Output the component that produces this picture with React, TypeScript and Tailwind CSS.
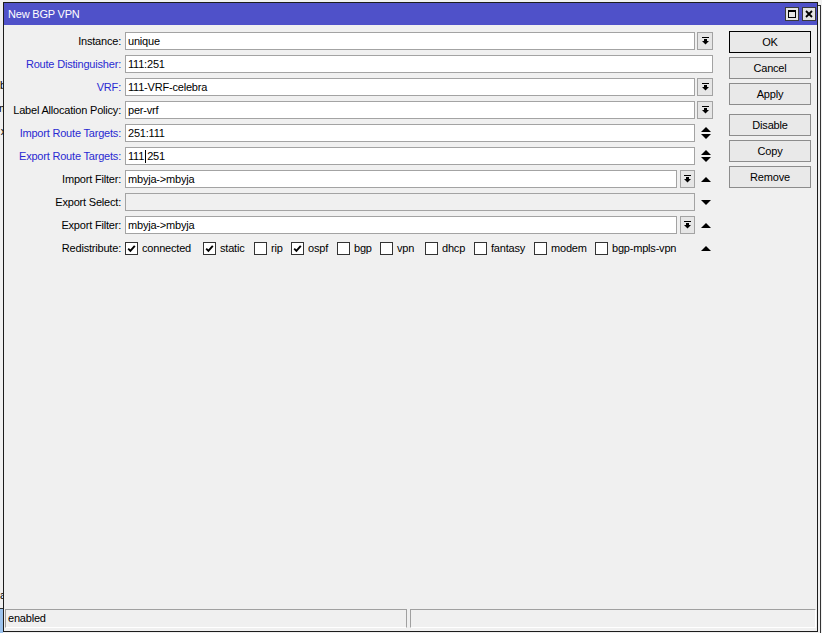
import React from "react";

const DropIcon = () => (
  <svg width="7" height="8" viewBox="0 0 7 8" className="block">
    <rect x="0" y="0" width="7" height="1" fill="#000" />
    <rect x="2" y="2" width="3" height="2" fill="#000" />
    <polygon points="0,4 7,4 3.5,7.5" fill="#000" />
  </svg>
);

const UpDown = () => (
  <svg width="10" height="12" viewBox="0 0 10 12" className="block">
    <polygon points="5,0 10,5 0,5" fill="#000" />
    <polygon points="0,7 10,7 5,12" fill="#000" />
  </svg>
);

const Up = () => (
  <svg width="10" height="5" viewBox="0 0 10 5" className="block">
    <polygon points="5,0 10,5 0,5" fill="#000" />
  </svg>
);

const Down = () => (
  <svg width="10" height="5" viewBox="0 0 10 5" className="block">
    <polygon points="0,0 10,0 5,5" fill="#000" />
  </svg>
);

const Label = ({ text, blue }: { text: string; blue?: boolean }) => (
  <div
    className={`w-[117px] shrink-0 text-right whitespace-nowrap ${
      blue ? "text-[#2a2ad2]" : "text-black"
    }`}
  >
    {text}
  </div>
);

const Input = ({
  children,
  className = "",
  disabled,
}: {
  children?: React.ReactNode;
  className?: string;
  disabled?: boolean;
}) => (
  <div
    className={`h-[18px] border border-[#a3a3a3] flex items-center pl-[2px] whitespace-nowrap overflow-hidden ${
      disabled ? "bg-[#f0f0f0]" : "bg-white"
    } ${className}`}
  >
    {children}
  </div>
);

const DropBtn = ({ className = "" }: { className?: string }) => (
  <div
    className={`h-[18px] border border-[#a3a3a3] bg-[#e6e6e6] flex items-center justify-center shrink-0 ${className}`}
  >
    <DropIcon />
  </div>
);

const ArrowCol = ({ children }: { children?: React.ReactNode }) => (
  <div className="w-[18px] h-[18px] shrink-0 flex items-center pl-[6px]">{children}</div>
);

const Row = ({ children }: { children: React.ReactNode }) => (
  <div className="flex items-center h-[18px] gap-[4px]">{children}</div>
);

const Check = ({ checked }: { checked?: boolean }) => (
  <span className="w-[13px] h-[13px] shrink-0 border border-[#333333] bg-white flex items-center justify-center">
    {checked && (
      <svg width="9" height="9" viewBox="0 0 9 9" className="block">
        <path d="M1.2 4.6 L3.4 6.8 L7.8 1.8" stroke="#000" strokeWidth="1.9" fill="none" />
      </svg>
    )}
  </span>
);

const Cb = ({ label, checked, w }: { label: string; checked?: boolean; w: string }) => (
  <div className={`flex items-center gap-[4px] shrink-0 ${w}`}>
    <Check checked={checked} />
    <span className="whitespace-nowrap">{label}</span>
  </div>
);

const Btn = ({ children, def, className = "" }: { children: React.ReactNode; def?: boolean; className?: string }) => (
  <div
    className={`w-[82px] h-[22px] border ${
      def ? "border-black" : "border-[#8c8c8c]"
    } bg-[#e9e9e9] flex items-center justify-center ${className}`}
  >
    {children}
  </div>
);

export default function App() {
  return (
    <div className="relative w-[822px] h-[633px] overflow-hidden bg-[#f0f0f0] font-['Liberation_Sans',Arial,sans-serif] text-[11px] tracking-[-0.2px] text-black">
      {/* background window remnants */}
      <div className="absolute left-0 top-0 w-[3px] h-[633px] overflow-hidden">
        <span className="absolute right-[-3px] top-[79px] leading-[13px]">b</span>
        <span className="absolute right-[-5px] top-[102px] leading-[13px]">m</span>
        <span className="absolute right-[-3px] top-[125px] leading-[13px]">x</span>
        <span className="absolute right-[-3px] top-[589px] leading-[13px]">a</span>
        <div className="absolute left-0 top-[608px] w-[3px] h-[25px] border-t border-[#333] bg-[#9cc3ee]" />
      </div>
      <div className="absolute left-[820px] top-[5px] w-px h-[628px] bg-[#333]" />
      <div className="absolute left-[817px] top-[5px] w-[4px] h-px bg-[#333]" />

      {/* main window */}
      <div className="absolute left-[3px] top-[2px] w-[815px] h-[630px] border border-[#1c1c1c] bg-[#f0f0f0] flex flex-col">
        {/* title bar */}
        <div className="h-[22px] shrink-0 bg-[#4f51c9] flex items-center pl-[4px] pr-[1px]">
          <span className="text-white flex-1">New BGP VPN</span>
          <div className="flex gap-[3px]">
            <div className="w-[14px] h-[14px] border border-[#3a3a3a] bg-[#e4e4e4] flex items-center justify-center">
              <div className="w-[8px] h-[8px] border border-black border-t-2" />
            </div>
            <div className="w-[14px] h-[14px] border border-[#3a3a3a] bg-[#e4e4e4] flex items-center justify-center">
              <svg width="8" height="8" viewBox="0 0 8 8" className="block">
                <path d="M1 1 L7 7 M7 1 L1 7" stroke="#000" strokeWidth="1.8" />
              </svg>
            </div>
          </div>
        </div>

        {/* body */}
        <div className="flex-1 flex">
          <div className="flex flex-col gap-[5px] pt-[7px]">
            <Row>
              <Label text="Instance:" />
              <div className="w-[588px] flex gap-[2px]">
                <Input className="w-[570px]">unique</Input>
                <DropBtn className="w-[16px]" />
              </div>
            </Row>
            <Row>
              <Label text="Route Distinguisher:" blue />
              <Input className="w-[588px]">111:251</Input>
            </Row>
            <Row>
              <Label text="VRF:" blue />
              <div className="w-[588px] flex gap-[2px]">
                <Input className="w-[570px]">111-VRF-celebra</Input>
                <DropBtn className="w-[16px]" />
              </div>
            </Row>
            <Row>
              <Label text="Label Allocation Policy:" />
              <div className="w-[588px] flex gap-[2px]">
                <Input className="w-[570px]">per-vrf</Input>
                <DropBtn className="w-[16px]" />
              </div>
            </Row>
            <Row>
              <Label text="Import Route Targets:" blue />
              <div className="w-[588px] flex">
                <Input className="w-[570px]">251:111</Input>
                <ArrowCol>
                  <UpDown />
                </ArrowCol>
              </div>
            </Row>
            <Row>
              <Label text="Export Route Targets:" blue />
              <div className="w-[588px] flex">
                <Input className="w-[570px]">
                  111
                  <span className="inline-flex w-[3px] h-[13px] justify-center">
                    <span className="w-px h-[13px] bg-black" />
                  </span>
                  251
                </Input>
                <ArrowCol>
                  <UpDown />
                </ArrowCol>
              </div>
            </Row>
            <Row>
              <Label text="Import Filter:" />
              <div className="w-[588px] flex">
                <div className="w-[570px] flex gap-[3px]">
                  <Input className="flex-1">mbyja-&gt;mbyja</Input>
                  <DropBtn className="w-[15px]" />
                </div>
                <ArrowCol>
                  <Up />
                </ArrowCol>
              </div>
            </Row>
            <Row>
              <Label text="Export Select:" />
              <div className="w-[588px] flex">
                <Input className="w-[570px]" disabled />
                <ArrowCol>
                  <Down />
                </ArrowCol>
              </div>
            </Row>
            <Row>
              <Label text="Export Filter:" />
              <div className="w-[588px] flex">
                <div className="w-[570px] flex gap-[3px]">
                  <Input className="flex-1">mbyja-&gt;mbyja</Input>
                  <DropBtn className="w-[15px]" />
                </div>
                <ArrowCol>
                  <Up />
                </ArrowCol>
              </div>
            </Row>
            <Row>
              <Label text="Redistribute:" />
              <div className="w-[588px] flex items-center">
                <div className="w-[570px] flex items-center">
                  <Cb label="connected" checked w="w-[78px]" />
                  <Cb label="static" checked w="w-[51px]" />
                  <Cb label="rip" w="w-[37px]" />
                  <Cb label="ospf" checked w="w-[46px]" />
                  <Cb label="bgp" w="w-[43px]" />
                  <Cb label="vpn" w="w-[45px]" />
                  <Cb label="dhcp" w="w-[49px]" />
                  <Cb label="fantasy" w="w-[60px]" />
                  <Cb label="modem" w="w-[61px]" />
                  <Cb label="bgp-mpls-vpn" w="w-[90px]" />
                </div>
                <ArrowCol>
                  <Up />
                </ArrowCol>
              </div>
            </Row>
          </div>

          <div className="ml-[16px] pt-[6px] flex flex-col gap-[4px]">
            <Btn def>OK</Btn>
            <Btn>Cancel</Btn>
            <Btn>Apply</Btn>
            <Btn className="mt-[5px]">Disable</Btn>
            <Btn>Copy</Btn>
            <Btn>Remove</Btn>
          </div>
        </div>

        {/* status bar */}
        <div className="h-[22px] shrink-0 flex gap-[3px] px-[1px] pb-[3px]">
          <div className="w-[402px] h-[19px] border-t border-l border-[#a0a0a0] border-r-[#a0a0a0] border-b-white border-r border-b flex items-center pl-[2px]">
            enabled
          </div>
          <div className="flex-1 h-[19px] border-t border-l border-[#a0a0a0] border-r border-b border-b-white border-r-white" />
        </div>
      </div>
    </div>
  );
}
